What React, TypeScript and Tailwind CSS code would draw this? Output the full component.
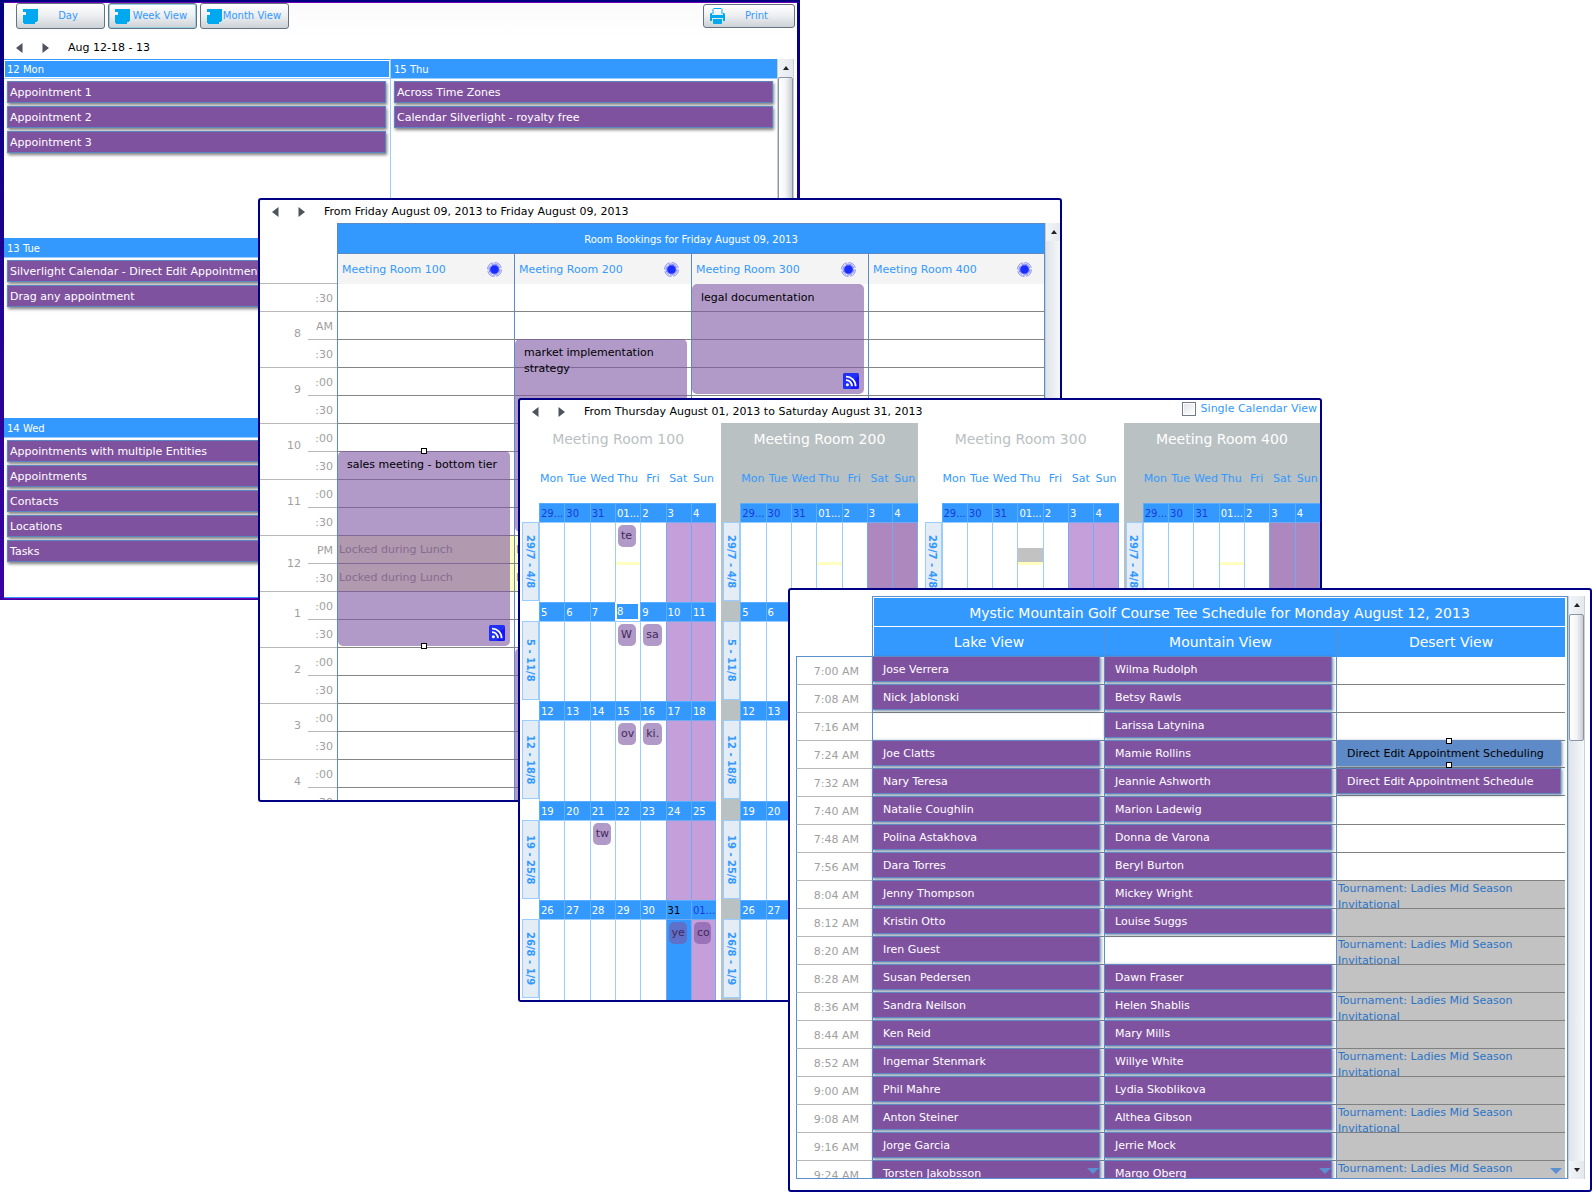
import React from "react";

function ArrowIcon({ dir }: { dir: "left" | "right" }) {
  return (
    <svg width="7" height="10" viewBox="0 0 7 10" className="block">
      <path d={dir === "left" ? "M6.5 0V10L0 5Z" : "M0.5 0V10L7 5Z"} fill="#4d545c" />
    </svg>
  );
}

function DateNav({ text, children }: { text: string; children?: React.ReactNode }) {
  return (
    <div className="flex h-[23px] shrink-0 items-center pl-3">
      <button aria-label="Previous"><ArrowIcon dir="left" /></button>
      <button aria-label="Next" className="ml-[19px]"><ArrowIcon dir="right" /></button>
      <span className="ml-[19px] whitespace-nowrap pt-px text-black">{text}</span>
      {children}
    </div>
  );
}

function SheetIcon() {
  return (
    <svg width="15" height="15" viewBox="0 0 15 15" className="shrink-0">
      <path d="M0 0H15V12H14V13H12V15H1V14H0V6H3V3H0Z" fill="#00a8f0" />
    </svg>
  );
}

function PrinterIcon() {
  return (
    <svg width="15" height="16" viewBox="0 0 15 16" className="shrink-0">
      <path d="M3 6V1.5L3.8 0.5H11.2L12 1.5V6" fill="none" stroke="#00a8f0" />
      <path d="M0 6L1 5H2V7H13V5H14L15 6V13H13V10H2V13H0Z" fill="#00a8f0" />
      <path d="M3 11H12V15L11.5 16H3.5L3 15Z" fill="#00a8f0" />
    </svg>
  );
}

function RssIcon() {
  return (
    <svg width="16" height="16" viewBox="0 0 16 16" className="absolute bottom-[5px] right-[5px]">
      <rect width="16" height="16" rx="1.5" fill="#2030f4" />
      <path d="M8 8L16 3V14.5L14.5 16H8Z" fill="#1414ff" />
      <circle cx="4.4" cy="11.8" r="1.5" fill="#fff" />
      <path d="M3 7.2A5.8 5.8 0 0 1 8.9 13.2M3 3.6A9.4 9.4 0 0 1 12.6 13.2" fill="none" stroke="#fff" strokeWidth="1.8" />
    </svg>
  );
}

function RingIcon() {
  return (
    <svg width="15" height="15" viewBox="0 0 15 15" className="block">
      <circle cx="7.5" cy="7.5" r="6.9" fill="none" stroke="#7f86f6" strokeWidth="0.9" strokeDasharray="9 1.8" />
      <circle cx="7.5" cy="7.5" r="5.5" fill="none" stroke="#5f68f8" strokeWidth="0.8" strokeDasharray="10 1" />
      <circle cx="7.5" cy="7.5" r="4.3" fill="#1a2cff" stroke="#3a48fb" strokeWidth="0.8" />
    </svg>
  );
}

function Handles() {
  return (
    <>
      <span className="absolute -top-[3px] left-1/2 z-10 size-[6px] -translate-x-1/2 border border-black bg-white" />
      <span className="absolute -bottom-[3px] left-1/2 z-10 size-[6px] -translate-x-1/2 border border-black bg-white" />
    </>
  );
}

function ScrollBar({ thumb, down }: { thumb?: string; down?: boolean }) {
  return (
    <div className="flex w-[17px] shrink-0 flex-col border-x border-[#c5d0da] bg-gradient-to-r from-[#dfe4ea] to-[#f6f8fa]">
      <button aria-label="Scroll up" className="flex h-[18px] shrink-0 items-center justify-center bg-gradient-to-r from-[#f2f4f6] to-[#e4e9ee]">
        <svg width="6" height="4" viewBox="0 0 6 4"><path d="M0 4L3 0L6 4Z" fill="#222" /></svg>
      </button>
      {thumb && <div className={`${thumb} rounded-[2px] border border-[#8996a3] bg-gradient-to-r from-white via-[#f4f5f7] to-[#c9ced5]`} />}
      {down && (
        <button aria-label="Scroll down" className="mt-auto flex h-[18px] shrink-0 items-center justify-center bg-gradient-to-r from-[#f2f4f6] to-[#e4e9ee]">
          <svg width="6" height="4" viewBox="0 0 6 4"><path d="M0 0L3 4L6 0Z" fill="#222" /></svg>
        </button>
      )}
    </div>
  );
}

function ToolButton({ label, icon, className }: { label: string; icon: React.ReactNode; className: string }) {
  return (
    <button className={`flex items-center rounded-[3px] border border-[#66737f] bg-gradient-to-b from-white via-[#eceef0] to-[#cdd2d7] pl-1.5 pr-1.5 text-[10px] text-[#3399ff] ${className}`}>
      {icon}
      <span className="flex-1 whitespace-nowrap text-center">{label}</span>
    </button>
  );
}

function DaySection({ title, items, selected }: { title: string; items: string[]; selected?: boolean }) {
  return (
    <section className="min-h-0">
      <h3 className={`h-5 border-t border-[#3399ff] border-b border-b-[#99ccff] ${selected ? "p-px" : "bg-[#3399ff] py-px"}`}>
        <span className={`block h-4 bg-[#3399ff] text-[10px] leading-[17px] text-white ${selected ? "px-0.5" : "px-[3px]"}`}>{title}</span>
      </h3>
      <ul className="flex flex-col gap-[3px] pl-[3px] pr-1 pt-0.5">
        {items.map((t) => (
          <li key={t} className="h-[22px] overflow-hidden whitespace-nowrap border border-[#5b86c4] bg-[#7f529f] pl-0.5 leading-[22px] text-white shadow-[1px_2px_3px_rgba(0,0,0,0.5)]">
            {t}
          </li>
        ))}
      </ul>
    </section>
  );
}

function WeekWindow() {
  return (
    <div className="absolute left-0 right-[792px] top-0 isolate bg-gradient-to-b from-[#000080] to-[#3a00a4] pb-px pl-1 pr-[3px] pt-0.5">
      <div className="border-b border-t border-[#6a00b8] bg-white">
        <div className="flex h-[33px] items-start gap-[3px] bg-gradient-to-b from-[#fafafa] to-white pl-3 pr-0.5">
          <ToolButton label="Day" icon={<SheetIcon />} className="h-[26px] w-[89px]" />
          <ToolButton label="Week View" icon={<SheetIcon />} className="h-[26px] w-[89px] ring-1 ring-inset ring-[#8fd0e4]" />
          <ToolButton label="Month View" icon={<SheetIcon />} className="h-[26px] w-[89px]" />
          <ToolButton label="Print" icon={<PrinterIcon />} className="ml-auto mt-px h-6 w-[92px]" />
        </div>
        <DateNav text="Aug 12-18 - 13" />
        <div className="flex h-[539px] border-b border-[#3399ff]">
          <div className="grid flex-1 grid-rows-3">
            <DaySection title="12 Mon" selected items={["Appointment 1", "Appointment 2", "Appointment 3"]} />
            <DaySection title="13 Tue" items={["Silverlight Calendar - Direct Edit Appointments", "Drag any appointment"]} />
            <DaySection title="14 Wed" items={["Appointments with multiple Entities", "Appointments", "Contacts", "Locations", "Tasks"]} />
          </div>
          <div className="flex-1 border-l border-[#99ccff]">
            <DaySection title="15 Thu" items={["Across Time Zones", "Calendar Silverlight - royalty free"]} />
          </div>
          <ScrollBar thumb="h-[300px]" />
          <div className="w-[3px]" />
        </div>
      </div>
    </div>
  );
}

function Panel({ place, children }: { place: string; children: React.ReactNode }) {
  return (
    <div className={`absolute isolate flex h-[604px] flex-col overflow-hidden rounded-[3px] border-2 border-[#000084] bg-white ${place}`}>
      {children}
    </div>
  );
}

const rooms = ["Meeting Room 100", "Meeting Room 200", "Meeting Room 300", "Meeting Room 400"];

const slots: { hour?: string; min: string }[] = [
  { hour: "", min: ":30" },
  { hour: "8", min: "AM" }, { min: ":30" },
  { hour: "9", min: ":00" }, { min: ":30" },
  { hour: "10", min: ":00" }, { min: ":30" },
  { hour: "11", min: ":00" }, { min: ":30" },
  { hour: "12", min: "PM" }, { min: ":30" },
  { hour: "1", min: ":00" }, { min: ":30" },
  { hour: "2", min: ":00" }, { min: ":30" },
  { hour: "3", min: ":00" }, { min: ":30" },
  { hour: "4", min: ":00" }, { min: ":30" },
];

type Booking = { row: number; room: number; text: string; size: string; rss?: boolean; handles?: boolean };
const bookings: Booking[] = [
  { row: 0, room: 2, text: "legal documentation", size: "top-0 h-[110px]", rss: true },
  { row: 2, room: 1, text: "market implementation strategy", size: "-top-px h-[193px]" },
  { row: 6, room: 0, text: "sales meeting - bottom tier", size: "-top-px h-[195px]", rss: true, handles: true },
  { row: 13, room: 1, text: "", size: "top-0 h-[170px]" },
];

function BookingWindow() {
  return (
    <Panel place="left-[258px] right-[530px] top-[198px]">
      <DateNav text="From Friday August 09, 2013 to Friday August 09, 2013" />
      <div className="flex min-h-0 flex-1">
        <div className="min-w-0 flex-1 overflow-hidden">
          <table className="w-full table-fixed border-separate border-spacing-0">
            <colgroup>
              <col className="w-12" />
              <col className="w-[29px]" />
              <col /><col /><col /><col />
            </colgroup>
            <thead>
              <tr>
                <td colSpan={2} rowSpan={2} className="border-b border-[#b8b8b8]" />
                <th colSpan={4} className="h-[31px] border border-[#5b8bc6] bg-[#3399ff] p-0 pt-0.5 text-center text-[10px] font-normal text-white">
                  Room Bookings for Friday August 09, 2013
                </th>
              </tr>
              <tr>
                {rooms.map((r) => (
                  <th key={r} className="h-[30px] border-l border-[#5b8bc6] bg-[#f4f4f4] p-0 font-normal last:border-r">
                    <div className="flex items-center justify-between pl-1 pr-3">
                      <span className="whitespace-nowrap pt-0.5 text-[#3399ff]">{r}</span>
                      <RingIcon />
                    </div>
                  </th>
                ))}
              </tr>
            </thead>
            <tbody>
              {slots.map((s, i) => (
                <tr key={i}>
                  {s.hour !== undefined && (
                    <th
                      rowSpan={i === 0 ? 1 : 2}
                      className={`border-b border-[#b8b8b8] p-0 pr-[7px] text-right align-middle font-normal text-[#a0a0a0] ${s.hour === "12" ? "" : "pb-3"}`}
                    >
                      {s.hour}
                    </th>
                  )}
                  <td className="h-7 border-b border-[#b8b8b8] p-0 pr-1 pt-0.5 text-right text-[#a0a0a0]">{s.min}</td>
                  {rooms.map((r, c) => {
                    const b = bookings.find((x) => x.row === i && x.room === c);
                    const locked = i === 9 || i === 10;
                    return (
                      <td
                        key={r}
                        className={`relative h-7 border-b border-l border-b-[#858585] border-l-[#5b8bc6] p-0 pl-px last:border-r last:border-r-[#5b8bc6] ${locked ? "bg-[#ffffc0] text-[#918d70]" : ""}`}
                      >
                        {locked && "Locked during Lunch"}
                        {b && (
                          <div className={`absolute left-0 right-1 z-10 rounded-[5px] bg-[#7d55a3]/60 py-1.5 pl-[9px] pr-6 leading-4 text-black ${b.size}`}>
                            <span className={b.handles ? "whitespace-nowrap" : ""}>{b.text}</span>
                            {b.rss && <RssIcon />}
                            {b.handles && <Handles />}
                          </div>
                        )}
                      </td>
                    );
                  })}
                </tr>
              ))}
            </tbody>
          </table>
        </div>
        <div className="-mr-0.5 flex"><ScrollBar /></div>
      </div>
    </Panel>
  );
}

const weekdays = ["Mon", "Tue", "Wed", "Thu", "Fri", "Sat", "Sun"];
const weeks = [
  { label: "29/7 - 4/8", days: ["29...", "30", "31", "01...", "2", "3", "4"], height: "h-20" },
  { label: "5 - 11/8", days: ["5", "6", "7", "8", "9", "10", "11"], height: "h-20" },
  { label: "12 - 18/8", days: ["12", "13", "14", "15", "16", "17", "18"], height: "h-[81px]" },
  { label: "19 - 25/8", days: ["19", "20", "21", "22", "23", "24", "25"], height: "h-20" },
  { label: "26/8 - 1/9", days: ["26", "27", "28", "29", "30", "31", "01..."], height: "h-[81px]" },
];
const monthEvents: Record<string, string> = {
  "0-3": "te", "1-3": "W", "1-4": "sa", "2-3": "ov", "2-4": "ki.", "3-2": "tw", "4-5": "ye", "4-6": "co",
};

function MonthCalendar({ index }: { index: number }) {
  const gray = index % 2 === 1;
  const first = index === 0;
  return (
    <div className={`pl-0.5 ${gray ? "bg-[#b9c1c2]" : "bg-white"}`}>
      <table className="w-full table-fixed border-separate border-spacing-0">
        <caption className={`h-8 pr-0.5 text-sm leading-8 ${gray ? "text-white" : "text-[#b9c1c2]"}`}>{rooms[index]}</caption>
        <colgroup>
          <col className="w-[17px]" />
          <col /><col /><col /><col /><col /><col /><col />
        </colgroup>
        <thead>
          <tr>
            <td />
            {weekdays.map((d) => (
              <th key={d} className="h-12 p-0 font-normal text-[#3399ff]">
                <span className="flex justify-center">{d}</span>
              </th>
            ))}
          </tr>
        </thead>
        <tbody>
          {weeks.map((w, wi) => (
            <React.Fragment key={w.label}>
              <tr>
                <td className="p-0" />
                {w.days.map((d, di) => {
                  const other = (wi === 0 && di < 3) || (wi === 4 && di === 6);
                  const today = wi === 1 && di === 3;
                  const picked = first && wi === 4 && di === 5;
                  return (
                    <td
                      key={di}
                      className={`h-[19px] bg-[#3399ff] p-0 text-[10px] leading-4 ${today ? "border-2 border-white" : "border-l border-t border-[#5badff] pl-px"} ${other ? "text-[#1c39d8]" : picked ? "text-black" : "text-white"}`}
                    >
                      <span className="block h-[15px] w-0 whitespace-nowrap">{d}</span>
                    </td>
                  );
                })}
              </tr>
              <tr>
                <th className="p-0 align-top">
                  <span className="flex h-[79px] w-[17px] items-center justify-center border border-[#99ccff] bg-[#e4ecf6] pr-0.5 text-[10px] font-bold leading-3 text-[#3399ff] [writing-mode:vertical-rl]">
                    {w.label}
                  </span>
                </th>
                {w.days.map((_, di) => {
                  const ev = first ? monthEvents[`${wi}-${di}`] : undefined;
                  const picked = first && wi === 4 && di === 5;
                  const weekend = di > 4;
                  const bg = picked ? "bg-[#3399ff]" : weekend ? (gray ? "bg-[#ad88bf]" : "bg-[#c59fd9]") : "bg-white";
                  return (
                    <td
                      key={di}
                      className={`border-l border-t p-0 align-top last:border-r ${w.height} ${bg} ${weekend ? "border-[#76aaf0]" : "border-[#99ccff]"}`}
                    >
                      {ev && (
                        <div className="ml-0.5 mr-1 mt-0.5 h-[22px] overflow-hidden whitespace-nowrap rounded-[5px] bg-[#7d55a3]/60 pl-[3px] leading-[22px] text-[#3f2a5c]">
                          {ev}
                        </div>
                      )}
                      {wi === 0 && di === 3 && (
                        <div className={first ? "mt-[15px]" : index === 2 ? "mt-[25px] border-t-[14px] border-[#c2c2c2]" : "mt-[39px]"}>
                          <div className="h-[3px] bg-[#ffffc0]" />
                        </div>
                      )}
                    </td>
                  );
                })}
              </tr>
            </React.Fragment>
          ))}
        </tbody>
      </table>
    </div>
  );
}

function MonthWindow() {
  return (
    <Panel place="left-[518px] right-[270px] top-[398px]">
      <DateNav text="From Thursday August 01, 2013 to Saturday August 31, 2013">
        <label className="mb-1.5 ml-auto mr-[3px] flex items-center gap-[5px] whitespace-nowrap text-[#3399ff]">
          <input type="checkbox" className="size-[14px] appearance-none border border-[#6f7b87] bg-gradient-to-br from-[#dfe4e8] to-white shadow-[inset_0_0_0_1px_white]" />
          <span className="pt-px">Single Calendar View</span>
        </label>
      </DateNav>
      <div className="grid min-h-0 flex-1 grid-cols-4 gap-[5px]">
        {rooms.map((r, i) => <MonthCalendar key={r} index={i} />)}
      </div>
    </Panel>
  );
}

const tee: [string, string, string][] = [
  ["7:00 AM", "Jose Verrera", "Wilma Rudolph"],
  ["7:08 AM", "Nick Jablonski", "Betsy Rawls"],
  ["7:16 AM", "", "Larissa Latynina"],
  ["7:24 AM", "Joe Clatts", "Mamie Rollins"],
  ["7:32 AM", "Nary Teresa", "Jeannie Ashworth"],
  ["7:40 AM", "Natalie Coughlin", "Marion Ladewig"],
  ["7:48 AM", "Polina Astakhova", "Donna de Varona"],
  ["7:56 AM", "Dara Torres", "Beryl Burton"],
  ["8:04 AM", "Jenny Thompson", "Mickey Wright"],
  ["8:12 AM", "Kristin Otto", "Louise Suggs"],
  ["8:20 AM", "Iren Guest", ""],
  ["8:28 AM", "Susan Pedersen", "Dawn Fraser"],
  ["8:36 AM", "Sandra Neilson", "Helen Shablis"],
  ["8:44 AM", "Ken Reid", "Mary Mills"],
  ["8:52 AM", "Ingemar Stenmark", "Willye White"],
  ["9:00 AM", "Phil Mahre", "Lydia Skoblikova"],
  ["9:08 AM", "Anton Steiner", "Althea Gibson"],
  ["9:16 AM", "Jorge Garcia", "Jerrie Mock"],
  ["9:24 AM", "Torsten Jakobsson", "Margo Oberg"],
];

function TeeSlot({ name, selected }: { name: string; selected?: boolean }) {
  return (
    <div
      className={`relative -ml-px -mt-px mr-1 h-[26px] whitespace-nowrap border border-[#6189c6] pl-[10px] leading-[26px] shadow-[1px_1px_3px_rgba(70,100,130,0.8)] ${selected ? "z-10 bg-[#5e8bc8] text-black" : "bg-[#7f529f] text-white"}`}
    >
      {name}
      {selected && <Handles />}
    </div>
  );
}

function MoreMark() {
  return (
    <svg width="12" height="6" viewBox="0 0 12 6" className="absolute right-[5px] top-[7px]">
      <path d="M0 0H12L6 6Z" fill="#5b8fd0" />
    </svg>
  );
}

function TeeWindow() {
  const last = tee.length - 1;
  return (
    <Panel place="left-[788px] right-0 top-[588px]">
      <div className="flex min-h-0 flex-1 pb-[11px] pl-1.5 pr-[5px] pt-1.5">
        <div className="min-w-0 flex-1 overflow-hidden border-b border-[#5b8fcf]">
          <table className="w-full table-fixed border-separate border-spacing-0">
            <colgroup>
              <col className="w-[76px]" />
              <col /><col /><col />
            </colgroup>
            <thead className="text-sm text-white">
              <tr>
                <td rowSpan={2} className="border-b border-[#5b8fcf]" />
                <th colSpan={3} className="h-[31px] border-x border-t border-[#5b8fcf] p-px pr-0.5 font-normal">
                  <div className="h-7 bg-[#3399ff] leading-[30px]">Mystic Mountain Golf Course Tee Schedule for Monday August 12, 2013</div>
                </th>
              </tr>
              <tr>
                <th className="h-[30px] border-l border-[#5b8fcf] p-0 pl-px font-normal"><div className="h-[30px] bg-[#3399ff] leading-[30px]">Lake View</div></th>
                <th className="h-[30px] border-l border-[#5b8fcf] p-0 font-normal"><div className="h-[30px] bg-[#3399ff] leading-[30px]">Mountain View</div></th>
                <th className="h-[30px] border-x border-[#5b8fcf] p-0 pr-0.5 font-normal"><div className="h-[30px] bg-[#3399ff] leading-[30px]">Desert View</div></th>
              </tr>
            </thead>
            <tbody>
              {tee.map(([time, lake, mountain], i) => (
                <tr key={time}>
                  <th className="h-7 border-b border-l border-b-[#b8b8b8] border-l-[#5b8fcf] p-0 pr-[13px] pt-0.5 text-right font-normal text-[#a0a0a0]">{time}</th>
                  {[lake, mountain].map((n, c) => (
                    <td key={c} className="relative h-7 border-b border-l border-b-[#808080] border-l-[#5b8fcf] p-0 align-top">
                      {n && <TeeSlot name={n} />}
                      {i === last && <MoreMark />}
                    </td>
                  ))}
                  <td className="relative h-7 border-x border-[#5b8fcf] p-0 pr-0.5 align-top">
                    <div className={`h-7 border-b border-[#808080] ${i >= 8 ? "overflow-hidden bg-[#c2c2c2] pl-px leading-4 text-[#2a75c8]" : ""}`}>
                      {i === 3 && <TeeSlot name="Direct Edit Appointment Scheduling" selected />}
                      {i === 4 && <TeeSlot name="Direct Edit Appointment Schedule" />}
                      {i >= 8 && i % 2 === 0 && "Tournament: Ladies Mid Season Invitational"}
                    </div>
                    {i === last && <MoreMark />}
                  </td>
                </tr>
              ))}
            </tbody>
          </table>
        </div>
        <ScrollBar thumb="h-[127px]" down />
      </div>
    </Panel>
  );
}

export default function App() {
  return (
    <main className="relative min-h-screen w-full overflow-hidden bg-white font-['DejaVu_Sans',Verdana,sans-serif] text-[11px] leading-4">
      <WeekWindow />
      <BookingWindow />
      <MonthWindow />
      <TeeWindow />
    </main>
  );
}
